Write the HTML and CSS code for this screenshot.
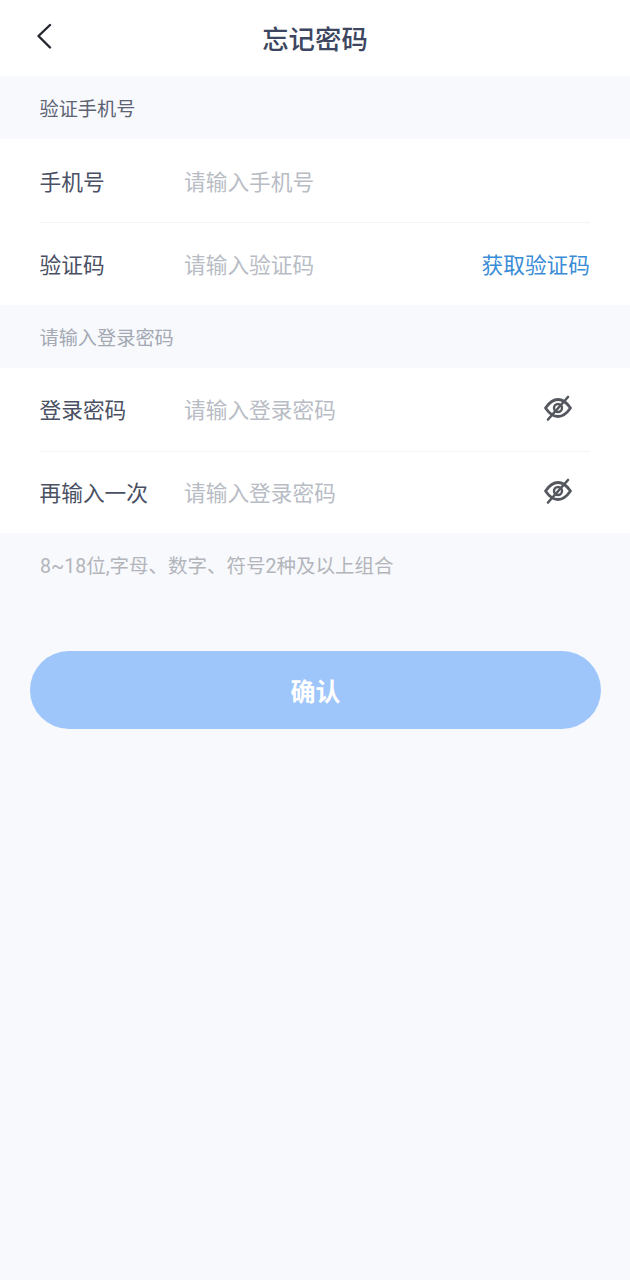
FILE: index.html
```html
<!DOCTYPE html>
<html lang="zh-CN">

<head>
    <meta charset="UTF-8">
    <meta name="viewport" content="width=device-width, initial-scale=1.0">
    <title>忘记密码</title>
    <link rel="stylesheet" href="styles.css">
</head>

<body>
    <div id="app">
        <nav class="top-bar">
            <button class="back-btn" aria-label="返回">
                <svg width="16" height="26" viewBox="0 0 16 26">
                    <path d="M14 2 L2.5 13 L14 24.5" fill="none" stroke="#24272e" stroke-width="2.4" stroke-linecap="round" stroke-linejoin="round" />
                </svg>
            </button>
            <h1>忘记密码</h1>
        </nav>

        <div class="section-title dark">验证手机号</div>
        <div class="group phone">
            <div class="row">
                <span class="label">手机号</span>
                <span class="placeholder">请输入手机号</span>
            </div>
            <div class="row">
                <span class="label">验证码</span>
                <span class="placeholder">请输入验证码</span>
                <span class="get-code">获取验证码</span>
            </div>
        </div>

        <div class="section-title">请输入登录密码</div>
        <div class="group password">
            <div class="row">
                <span class="label">登录密码</span>
                <span class="placeholder">请输入登录密码</span>
                <svg class="eye" width="30" height="28" viewBox="0 0 30 28">
                    <path d="M2.5 14 C7 7.5 11 5.5 15 5.5 C19 5.5 23 7.5 27.5 14 C23 20.5 19 22.5 15 22.5 C11 22.5 7 20.5 2.5 14 Z" fill="none" stroke="#54585e" stroke-width="2.8" stroke-linejoin="round" />
                    <circle cx="15" cy="14" r="4" fill="none" stroke="#54585e" stroke-width="2.4" />
                    <path d="M5 25.5 L25 3" stroke="#54585e" stroke-width="2.6" stroke-linecap="round" />
                </svg>
            </div>
            <div class="row">
                <span class="label">再输入一次</span>
                <span class="placeholder">请输入登录密码</span>
                <svg class="eye" width="30" height="28" viewBox="0 0 30 28">
                    <path d="M2.5 14 C7 7.5 11 5.5 15 5.5 C19 5.5 23 7.5 27.5 14 C23 20.5 19 22.5 15 22.5 C11 22.5 7 20.5 2.5 14 Z" fill="none" stroke="#54585e" stroke-width="2.8" stroke-linejoin="round" />
                    <circle cx="15" cy="14" r="4" fill="none" stroke="#54585e" stroke-width="2.4" />
                    <path d="M5 25.5 L25 3" stroke="#54585e" stroke-width="2.6" stroke-linecap="round" />
                </svg>
            </div>
        </div>

        <p class="hint">8~18位,字母、数字、符号2种及以上组合</p>

        <button class="confirm">确认</button>
    </div>
</body>

</html>
```

FILE: styles.css
```css
html,
body {
    height: 100%;
    margin: 0;
    padding: 0;
    overflow: hidden;
}

body {
    background-color: #f7f9fd;
    font-family: Roboto, "Noto Sans CJK SC", sans-serif;
}

#app {
    display: flex;
    flex-direction: column;
    height: 100%;
}

.top-bar {
    position: relative;
    height: 76px;
    padding-bottom: 2px;
    box-sizing: border-box;
    background-color: #fff;
    display: flex;
    align-items: center;
    justify-content: center;
}

.top-bar h1 {
    margin: 0;
    font-size: 26.4px;
    font-weight: 500;
    color: #3d4660;
}

.back-btn {
    position: absolute;
    left: 36px;
    top: 23px;
    padding: 0;
    border: 0;
    background: none;
    display: flex;
}

.section-title {
    height: 63px;
    padding-left: 39.5px;
    display: flex;
    align-items: center;
    font-size: 19.2px;
    color: #a3a8b3;
}

.section-title.dark {
    color: #5d6373;
}

.group {
    background-color: #fff;
}

.row {
    height: 83px;
    margin: 0 40px 0 39.5px;
    padding-bottom: 2px;
    display: flex;
    align-items: center;
    box-sizing: border-box;
    font-size: 21.7px;
}

.row+.row {
    border-top: 1px solid #f3f4f6;
}

.phone .row:first-child {
    padding-bottom: 0;
}

.password .row:last-child {
    height: 82px;
}

.label {
    width: 144.5px;
    color: #4a5063;
}

.placeholder {
    flex: 1;
    color: #b8bcc5;
}

.get-code {
    color: #3a8cd6;
}

.eye {
    margin-right: 17px;
    margin-top: -2px;
}

.hint {
    margin: 0;
    padding: 22px 0 0 40px;
    font-size: 19.5px;
    line-height: 24px;
    color: #b3b5ba;
}

.confirm {
    margin: 72px 29px 0 30px;
    height: 78px;
    border: 0;
    border-radius: 39px;
    background-color: #9fc6fb;
    color: #fff;
    font-family: inherit;
    font-size: 25px;
    font-weight: 700;
}
```
